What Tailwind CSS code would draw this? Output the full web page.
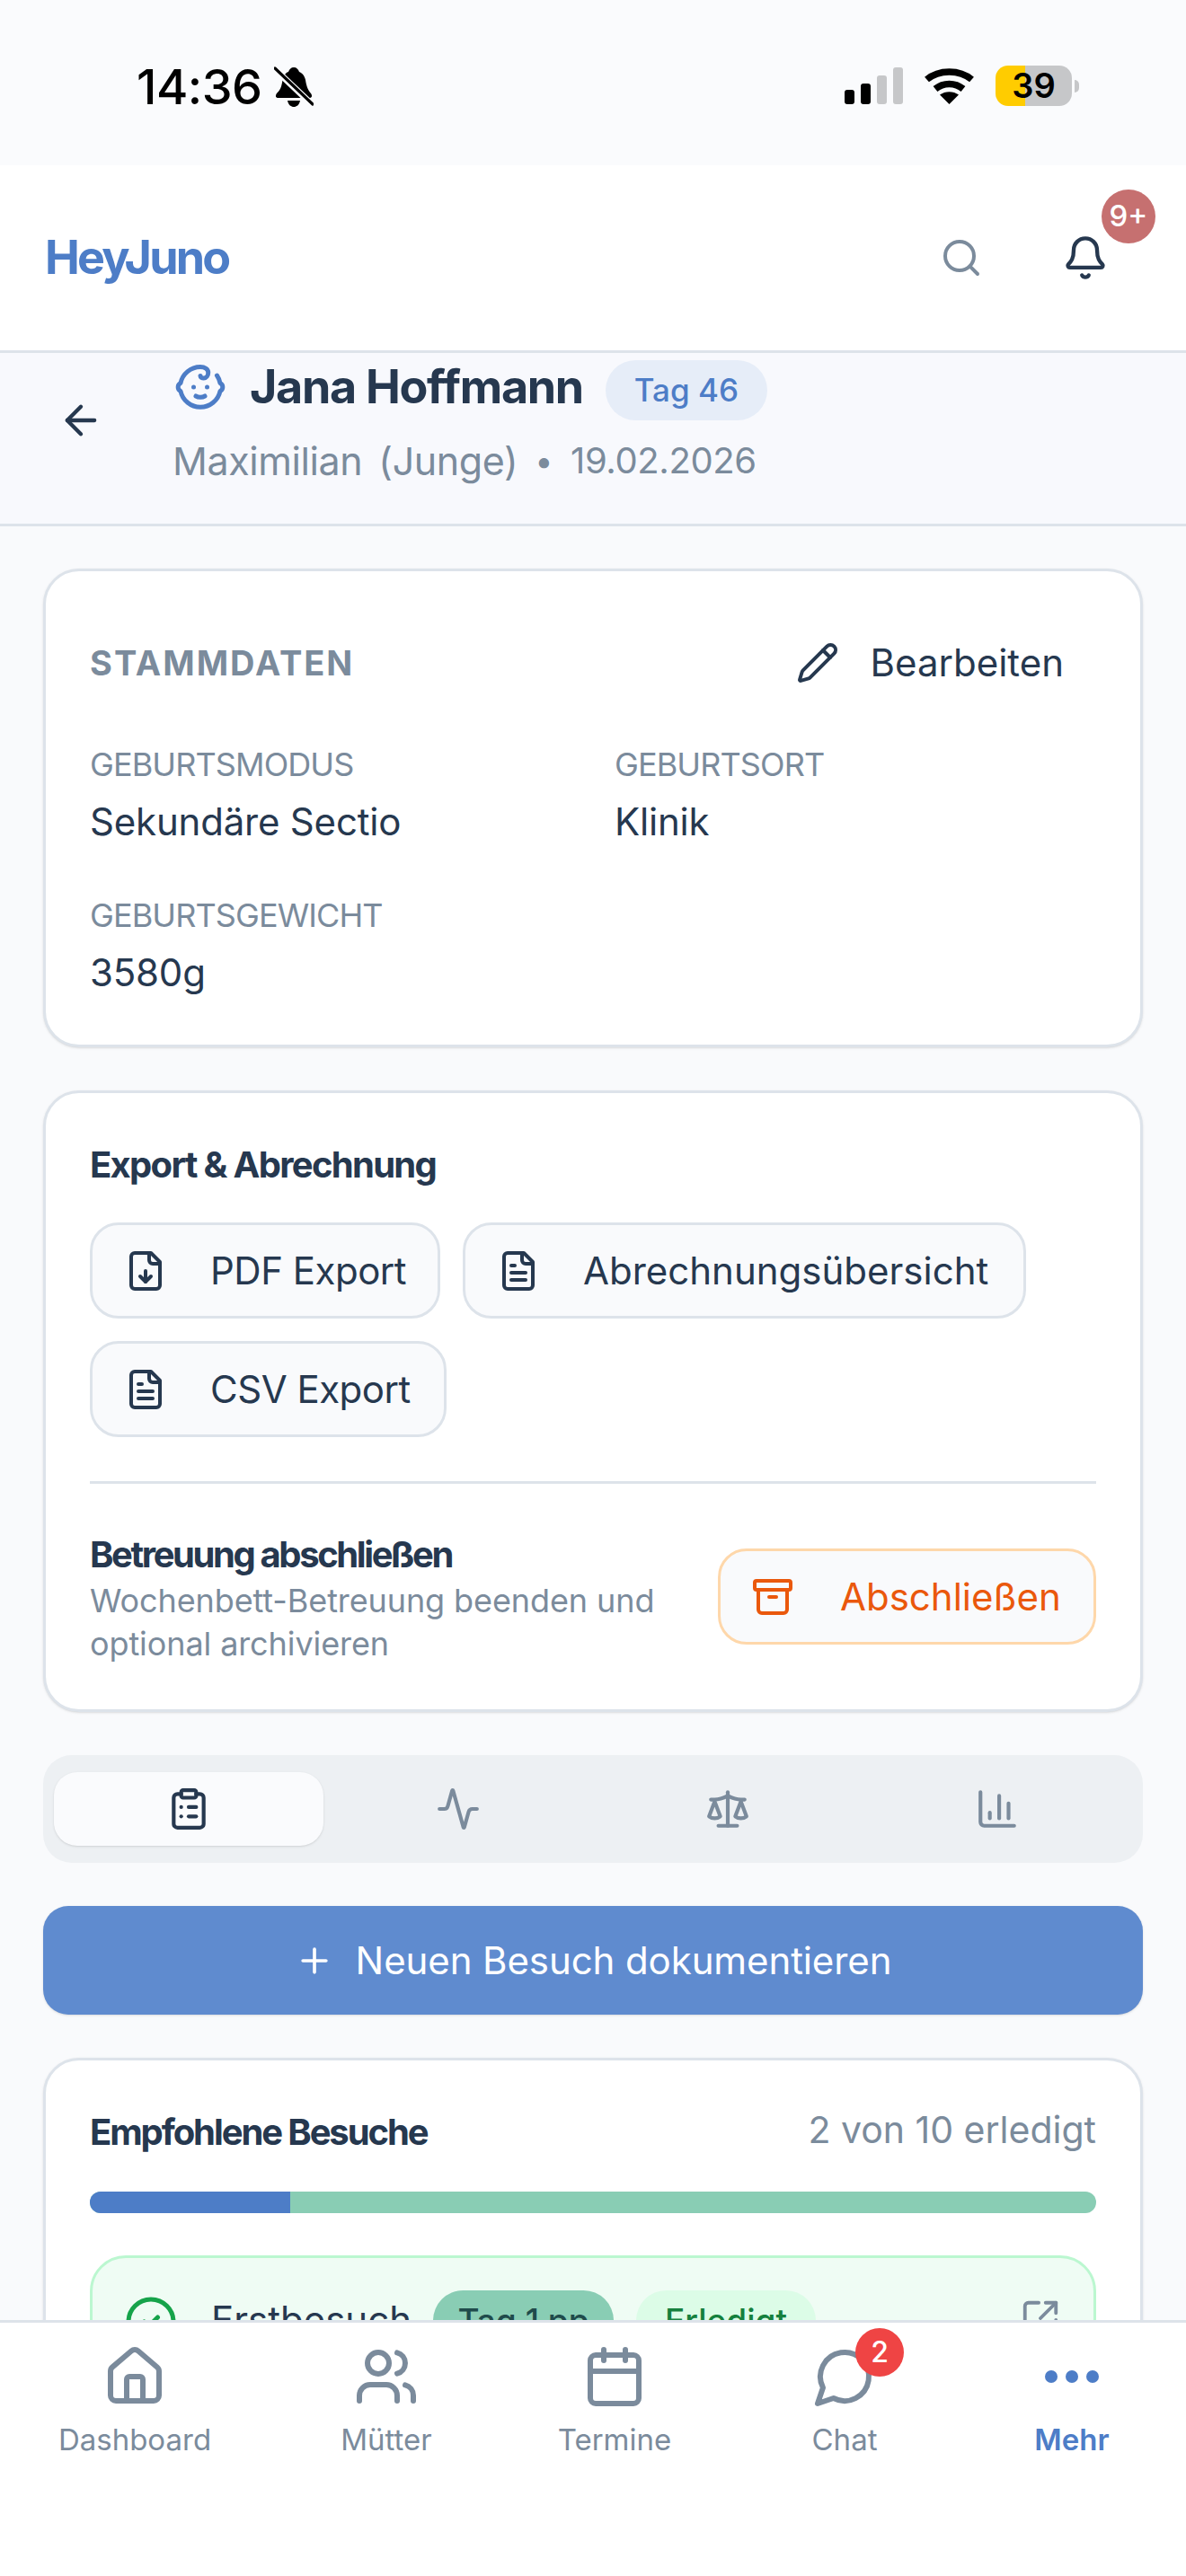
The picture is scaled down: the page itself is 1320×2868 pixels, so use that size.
<!DOCTYPE html>
<html lang="de">
<head>
<meta charset="utf-8">
<script src="https://cdn.jsdelivr.net/npm/@tailwindcss/browser@4"></script>
<title>HeyJuno</title>
</head>
<body class="m-0 bg-[#f9fafc]">
<div class="w-[1320px] h-[2868px] flex flex-col overflow-hidden font-['Inter',sans-serif] text-[#26384f] bg-[#f9fafc]">

  <!-- status bar -->
  <div class="h-[184px] shrink-0 bg-[#fafbfd] relative flex justify-between items-start pt-[66px] pl-[152px] pr-[119px] text-black">
    <div class="flex items-center gap-[13px]">
      <span class="text-[54px] leading-[62px] font-medium tracking-[-0.5px]">14:36</span>
      <svg width="44" height="46" viewBox="0 0 44 46"><path d="M22 1c3 0 5 2 6 5 3 1 6 4 7 9 1 6 2 10 6 15 2 3 1 5-2 5H5c-3 0-4-2-2-5 4-4 5-7 6-12 1-6 3-11 7-12 1-3 3-5 6-5z" fill="#000"/><path d="M15 38h14c-1 5-4 7-7 7s-6-2-7-7z" fill="#000"/><path d="M2 4l40 38" stroke="#fafbfd" stroke-width="7"/><path d="M1 2l42 40" stroke="#000" stroke-width="3.2" stroke-linecap="round"/></svg>
    </div>
    <div class="flex items-start gap-[23px] pt-[8px]">
      <svg width="65" height="41" viewBox="0 0 65 41" class="mt-[1px]"><rect x="0" y="25" width="11" height="16" rx="3" fill="#000"/><rect x="18" y="18" width="11" height="23" rx="3" fill="#000"/><rect x="36" y="9" width="11" height="32" rx="3" fill="#c6c7c9"/><rect x="54" y="0" width="11" height="41" rx="3" fill="#c6c7c9"/></svg>
      <svg width="57" height="42" viewBox="0 0 57 42"><path d="M3.5 14.5C17 3 40 3 53.500 14.500" fill="none" stroke="#000" stroke-width="7.500"/><path d="M13 25c9-7.500 22-7.500 31 0" fill="none" stroke="#000" stroke-width="7.500"/><path d="M28.500 42L18 31.500c6-4.500 15-4.500 21 0z" fill="#000"/></svg>
      <div class="flex items-center -mt-[1px]">
        <div class="w-[85px] h-[45px] rounded-[14px] bg-[linear-gradient(90deg,#ffcc00_33px,#c6c7c9_33px)] flex items-center justify-center">
          <span class="text-[38px] leading-[45px] font-semibold text-black">39</span>
        </div>
        <div class="w-[5px] h-[14px] ml-[3px] rounded-r-full bg-[#c6c7c9]"></div>
      </div>
    </div>
  </div>

  <!-- app header -->
  <header class="h-[209px] shrink-0 bg-white border-b-[3px] border-[#dde3ea] flex items-center justify-between pl-[50px] pr-[86px]">
    <div class="text-[52px] leading-[60px] font-bold tracking-[-2.800px] text-[#4d7dc7]">HeyJuno</div>
    <div class="flex items-center gap-[88px]">
      <svg width="48" height="48" viewBox="0 0 24 24" fill="none" stroke="#7b8b9c" stroke-width="2" stroke-linecap="round" stroke-linejoin="round"><path d="m21 21-4.300-4.300"/><circle cx="11" cy="11" r="8"/></svg>
      <div class="relative">
        <svg width="52" height="52" viewBox="0 0 24 24" fill="none" stroke="#26384f" stroke-width="2" stroke-linecap="round" stroke-linejoin="round"><path d="M10.268 21a2 2 0 0 0 3.464 0"/><path d="M3.262 15.326A1 1 0 0 0 4 17h16a1 1 0 0 0 .74-1.673C19.410 13.956 18 12.499 18 8A6 6 0 0 0 6 8c0 4.499-1.411 5.956-2.738 7.326"/></svg>
        <div class="absolute left-[44px] -top-[50px] w-[60px] h-[60px] rounded-full bg-[#c67070] text-white text-[33px] font-medium flex items-center justify-center">9+</div>
      </div>
    </div>
  </header>

  <!-- patient header -->
  <div class="h-[193px] shrink-0 bg-[#f8f9fd] border-b-[3px] border-[#dde3ea] flex items-start pl-[64px]">
    <svg class="mt-[49px] shrink-0" width="52" height="52" viewBox="0 0 24 24" fill="none" stroke="#26384f" stroke-width="2" stroke-linecap="round" stroke-linejoin="round"><path d="m12 19-7-7 7-7"/><path d="M19 12H5"/></svg>
    <div class="ml-[77px] flex flex-col">
      <div class="flex items-center h-[72px] mt-[2px]">
        <svg class="shrink-0" width="60" height="60" viewBox="0 0 24 24" fill="none" stroke="#4d7dc7" stroke-width="2" stroke-linecap="round" stroke-linejoin="round"><path d="M10 16c.5.3 1.200.5 2 .5s1.500-.2 2-.5"/><path d="M15 12h.01"/><path d="M19.380 6.813A9 9 0 0 1 20.800 10.200a2 2 0 0 1 0 3.600 9 9 0 0 1-17.600 0 2 2 0 0 1 0-3.600A9 9 0 0 1 12 3c2 0 3.500 1.100 3.500 2.500s-.9 2.500-2 2.500c-.8 0-1.500-.4-1.500-1"/><path d="M9 12h.01"/></svg>
        <span class="ml-[25px] text-[52px] leading-[60px] font-bold tracking-[-1.300px] text-[#26384f]">Jana Hoffmann</span>
        <span class="ml-[25px] mt-[6px] w-[180px] h-[67px] rounded-full bg-[#e6edf8] text-[#4d7dc7] text-[35px] font-medium flex items-center justify-center">Tag 46</span>
      </div>
      <div class="mt-[20px] flex items-center text-[43px] leading-[52px] text-[#7b8b9c] whitespace-nowrap tracking-[-0.400px] -ml-[1px]">
        <span>Maximilian</span>
        <span class="ml-[18px]">(Junge)</span>
        <span class="ml-[19px] text-[36px]">•</span>
        <span class="ml-[20px] text-[40px]">19.02.2026</span>
      </div>
    </div>
  </div>

  <!-- content -->
  <main class="flex-1 min-h-0 overflow-hidden px-[48px] pt-[47px] flex flex-col gap-[48px]">

    <!-- Stammdaten -->
    <section class="shrink-0 bg-white border-[3px] border-[#dde3ea] rounded-[40px] shadow-sm px-[49px] pt-[72px] pb-[52px]">
      <div class="flex items-center justify-between h-[60px]">
        <h2 class="text-[38px] leading-[60px] font-bold text-[#7b8b9c] tracking-[2px]">STAMMDATEN</h2>
        <div class="flex items-center gap-[35px] pr-[36px]">
          <svg width="48" height="48" viewBox="0 0 24 24" fill="none" stroke="#26384f" stroke-width="2" stroke-linecap="round" stroke-linejoin="round"><path d="M21.174 6.812a1 1 0 0 0-3.986-3.987L3.842 16.174a2 2 0 0 0-.5.83l-1.321 4.352a.5.5 0 0 0 .623.622l4.353-1.320a2 2 0 0 0 .83-.497z"/><path d="m15 5 4 4"/></svg>
          <span class="text-[42px] leading-[52px] font-normal">Bearbeiten</span>
        </div>
      </div>
      <div class="grid grid-cols-2 gap-x-[48px] gap-y-[53px] mt-[60px]">
        <div>
          <div class="text-[36px] leading-[46px] text-[#7b8b9c] tracking-[-0.900px]">GEBURTSMODUS</div>
          <div class="mt-[13px] text-[42px] leading-[56px] font-normal tracking-[-0.200px]">Sekundäre Sectio</div>
        </div>
        <div>
          <div class="text-[36px] leading-[46px] text-[#7b8b9c] tracking-[-0.900px]">GEBURTSORT</div>
          <div class="mt-[13px] text-[42px] leading-[56px] font-normal tracking-[-0.200px]">Klinik</div>
        </div>
        <div>
          <div class="text-[36px] leading-[46px] text-[#7b8b9c] tracking-[-0.900px]">GEBURTSGEWICHT</div>
          <div class="mt-[13px] text-[42px] leading-[56px] font-normal tracking-[-0.200px]">3580g</div>
        </div>
      </div>
    </section>

    <!-- Export -->
    <section class="shrink-0 bg-white border-[3px] border-[#dde3ea] rounded-[40px] shadow-sm px-[49px] pt-[52px] pb-[49px]">
      <h3 class="text-[40px] leading-[56px] font-bold tracking-[-1.700px]">Export &amp; Abrechnung</h3>
      <div class="mt-[36px] flex flex-wrap gap-x-[25px] gap-y-[25px] w-[1100px]">
        <div class="w-[390px] h-[107px] bg-[#f9fafc] border-[3px] border-[#dde3ea] rounded-[32px] flex items-center pl-[35px] gap-[48px]">
          <svg class="shrink-0" width="48" height="48" viewBox="0 0 24 24" fill="none" stroke="#26384f" stroke-width="2" stroke-linecap="round" stroke-linejoin="round"><path d="M15 2H6a2 2 0 0 0-2 2v16a2 2 0 0 0 2 2h12a2 2 0 0 0 2-2V7Z"/><path d="M14 2v4a2 2 0 0 0 2 2h4"/><path d="M12 18v-6"/><path d="m9 15 3 3 3-3"/></svg>
          <span class="text-[42px] font-normal tracking-[-0.500px] whitespace-nowrap">PDF Export</span>
        </div>
        <div class="w-[627px] h-[107px] bg-[#f9fafc] border-[3px] border-[#dde3ea] rounded-[32px] flex items-center pl-[35px] gap-[48px]">
          <svg class="shrink-0" width="48" height="48" viewBox="0 0 24 24" fill="none" stroke="#26384f" stroke-width="2" stroke-linecap="round" stroke-linejoin="round"><path d="M15 2H6a2 2 0 0 0-2 2v16a2 2 0 0 0 2 2h12a2 2 0 0 0 2-2V7Z"/><path d="M14 2v4a2 2 0 0 0 2 2h4"/><path d="M10 9H8"/><path d="M16 13H8"/><path d="M16 17H8"/></svg>
          <span class="text-[42px] font-normal whitespace-nowrap">Abrechnungsübersicht</span>
        </div>
        <div class="w-[397px] h-[107px] bg-[#f9fafc] border-[3px] border-[#dde3ea] rounded-[32px] flex items-center pl-[35px] gap-[48px]">
          <svg class="shrink-0" width="48" height="48" viewBox="0 0 24 24" fill="none" stroke="#26384f" stroke-width="2" stroke-linecap="round" stroke-linejoin="round"><path d="M15 2H6a2 2 0 0 0-2 2v16a2 2 0 0 0 2 2h12a2 2 0 0 0 2-2V7Z"/><path d="M14 2v4a2 2 0 0 0 2 2h4"/><path d="M10 9H8"/><path d="M16 13H8"/><path d="M16 17H8"/></svg>
          <span class="text-[42px] font-normal tracking-[-0.500px] whitespace-nowrap">CSV Export</span>
        </div>
      </div>
      <div class="mt-[49px] border-t-[3px] border-[#dde3ea] pt-[53px] flex items-center justify-between">
        <div class="w-[660px]">
          <div class="text-[40px] leading-[52px] font-bold tracking-[-2.400px]">Betreuung abschließen</div>
          <div class="mt-[1px] text-[36px] leading-[48px] text-[#7b8b9c] tracking-[-0.100px]">Wochenbett-Betreuung beenden und optional archivieren</div>
        </div>
        <div class="w-[421px] h-[107px] shrink-0 bg-[#f9fafc] border-[3px] border-[#fed7aa] rounded-[32px] flex items-center pl-[34px] gap-[51px] text-[#ea580c] -mt-[4px]">
          <svg class="shrink-0" width="48" height="48" viewBox="0 0 24 24" fill="none" stroke="#ea580c" stroke-width="2" stroke-linecap="round" stroke-linejoin="round"><rect width="20" height="5" x="2" y="3" rx="1"/><path d="M4 8v11a2 2 0 0 0 2 2h12a2 2 0 0 0 2-2V8"/><path d="M10 12h4"/></svg>
          <span class="text-[42px] font-normal whitespace-nowrap">Abschließen</span>
        </div>
      </div>
    </section>

    <!-- Tabs -->
    <div class="shrink-0 h-[120px] bg-[#edf0f3] rounded-[32px] px-[12px] py-[19px] grid grid-cols-4">
      <div class="bg-[#fafbfd] rounded-[26px] shadow-sm flex items-center justify-center">
        <svg width="50" height="50" viewBox="0 0 24 24" fill="none" stroke="#26384f" stroke-width="2" stroke-linecap="round" stroke-linejoin="round"><rect width="8" height="4" x="8" y="2" rx="1" ry="1"/><path d="M16 4h2a2 2 0 0 1 2 2v14a2 2 0 0 1-2 2H6a2 2 0 0 1-2-2V6a2 2 0 0 1 2-2h2"/><path d="M12 11h4"/><path d="M12 16h4"/><path d="M8 11h.01"/><path d="M8 16h.01"/></svg>
      </div>
      <div class="flex items-center justify-center">
        <svg width="50" height="50" viewBox="0 0 24 24" fill="none" stroke="#7b8b9c" stroke-width="2" stroke-linecap="round" stroke-linejoin="round"><path d="M22 12h-2.480a2 2 0 0 0-1.930 1.460l-2.350 8.360a.25.25 0 0 1-.48 0L9.240 2.180a.25.25 0 0 0-.48 0l-2.350 8.360A2 2 0 0 1 4.490 12H2"/></svg>
      </div>
      <div class="flex items-center justify-center">
        <svg width="50" height="50" viewBox="0 0 24 24" fill="none" stroke="#7b8b9c" stroke-width="2" stroke-linecap="round" stroke-linejoin="round"><path d="m16 16 3-8 3 8c-.87.65-1.920 1-3 1s-2.130-.35-3-1Z"/><path d="m2 16 3-8 3 8c-.87.65-1.920 1-3 1s-2.130-.35-3-1Z"/><path d="M7 21h10"/><path d="M12 3v18"/><path d="M3 7h2c2 0 5-1 7-2 2 1 5 2 7 2h2"/></svg>
      </div>
      <div class="flex items-center justify-center">
        <svg width="50" height="50" viewBox="0 0 24 24" fill="none" stroke="#7b8b9c" stroke-width="2" stroke-linecap="round" stroke-linejoin="round"><path d="M3 3v16a2 2 0 0 0 2 2h16"/><path d="M18 17V9"/><path d="M13 17V5"/><path d="M8 17v-3"/></svg>
      </div>
    </div>

    <!-- CTA -->
    <div class="shrink-0 h-[121px] bg-[#5f8bcf] rounded-[28px] shadow-sm flex items-center justify-center gap-[24px] text-white">
      <svg width="44" height="44" viewBox="0 0 24 24" fill="none" stroke="#fff" stroke-width="2" stroke-linecap="round" stroke-linejoin="round"><path d="M5 12h14"/><path d="M12 5v14"/></svg>
      <span class="text-[42px] font-normal tracking-[-0.100px]">Neuen Besuch dokumentieren</span>
    </div>

    <!-- Empfohlene Besuche -->
    <section class="shrink-0 bg-white border-[3px] border-[#dde3ea] rounded-[40px] shadow-sm px-[49px] pt-[50px] pb-[49px]">
      <div class="flex items-center justify-between h-[60px]">
        <h3 class="text-[40px] leading-[60px] font-bold tracking-[-2.100px]">Empfohlene Besuche</h3>
        <span class="text-[41px] leading-[60px] text-[#7b8b9c] -mt-[6px]">2 von 10 erledigt</span>
      </div>
      <div class="mt-[36px] h-[24px] rounded-full bg-[#89cdb4] overflow-hidden">
        <div class="w-[223px] h-full bg-[#4d7dc7]"></div>
      </div>
      <div class="mt-[47px] h-[220px] bg-[#effcf4] border-[3px] border-[#bbf7d0] rounded-[40px] pl-[35px] pr-[36px] pt-[36px] flex items-start">
        <svg class="mt-[5px] shrink-0" width="60" height="60" viewBox="0 0 24 24" fill="none" stroke="#16a34a" stroke-width="2" stroke-linecap="round" stroke-linejoin="round"><circle cx="12" cy="12" r="10"/><path d="m9 12 2 2 4-4"/></svg>
        <span class="ml-[37px] mt-[3px] w-[210px] text-[42px] leading-[60px] font-normal">Erstbesuch</span>
        <span class="ml-[37px] w-[201px] h-[67px] rounded-full bg-[#89cdb4] text-[#1f4b4b] text-[37px] font-medium flex items-center justify-center shrink-0">Tag 1 pp</span>
        <span class="ml-[25px] w-[200px] h-[67px] rounded-full bg-[#dcfce7] text-[#15803d] text-[37px] font-medium flex items-center justify-center shrink-0">Erledigt</span>
        <svg class="ml-auto mt-[8px] shrink-0" width="46" height="46" viewBox="0 0 24 24" fill="none" stroke="#7b8b9c" stroke-width="2" stroke-linecap="round" stroke-linejoin="round"><path d="M21 13v6a2 2 0 0 1-2 2H5a2 2 0 0 1-2-2V5a2 2 0 0 1 2-2h6"/><path d="m21 3-9 9"/><path d="M15 3h6v6"/></svg>
      </div>
    </section>
  </main>

  <!-- bottom nav -->
  <nav class="h-[285px] shrink-0 bg-white border-t-[3px] border-[#dde3ea] flex items-start pt-[24px] text-[#7b8b9c]">
    <div class="w-[300px] flex flex-col items-center gap-[14px]">
      <svg width="72" height="72" viewBox="0 0 24 24" fill="none" stroke="#7b8b9c" stroke-width="2" stroke-linecap="round" stroke-linejoin="round"><path d="M15 21v-8a1 1 0 0 0-1-1h-4a1 1 0 0 0-1 1v8"/><path d="M3 10a2 2 0 0 1 .709-1.528l7-5.999a2 2 0 0 1 2.582 0l7 5.999A2 2 0 0 1 21 10v9a2 2 0 0 1-2 2H5a2 2 0 0 1-2-2z"/></svg>
      <span class="text-[33px] leading-[40px] font-normal">Dashboard</span>
    </div>
    <div class="w-[260px] flex flex-col items-center gap-[14px]">
      <svg width="72" height="72" viewBox="0 0 24 24" fill="none" stroke="#7b8b9c" stroke-width="2" stroke-linecap="round" stroke-linejoin="round"><path d="M16 21v-2a4 4 0 0 0-4-4H6a4 4 0 0 0-4 4v2"/><path d="M16 3.128a4 4 0 0 1 0 7.744"/><path d="M22 21v-2a4 4 0 0 0-3-3.870"/><circle cx="9" cy="7" r="4"/></svg>
      <span class="text-[33px] leading-[40px] font-normal">Mütter</span>
    </div>
    <div class="w-[248px] flex flex-col items-center gap-[14px]">
      <svg width="72" height="72" viewBox="0 0 24 24" fill="none" stroke="#7b8b9c" stroke-width="2" stroke-linecap="round" stroke-linejoin="round"><path d="M8 2v4"/><path d="M16 2v4"/><rect width="18" height="18" x="3" y="4" rx="2"/><path d="M3 10h18"/></svg>
      <span class="text-[33px] leading-[40px] font-normal">Termine</span>
    </div>
    <div class="w-[264px] flex flex-col items-center gap-[14px]">
      <div class="relative w-[72px] h-[72px]">
        <svg width="72" height="72" viewBox="0 0 24 24" fill="none" stroke="#7b8b9c" stroke-width="2" stroke-linecap="round" stroke-linejoin="round"><path d="M7.900 20A9 9 0 1 0 4 16.100L2 22Z"/></svg>
        <div class="absolute left-[48px] -top-[18px] w-[54px] h-[54px] rounded-full bg-[#ef4444] text-white text-[32px] font-medium flex items-center justify-center">2</div>
      </div>
      <span class="text-[33px] leading-[40px] font-normal">Chat</span>
    </div>
    <div class="w-[242px] flex flex-col items-center gap-[14px] text-[#4d7dc7]">
      <svg width="72" height="72" viewBox="0 0 72 72" fill="#4d7dc7"><circle cx="13" cy="36" r="7"/><circle cx="36" cy="36" r="7"/><circle cx="59" cy="36" r="7"/></svg>
      <span class="text-[33px] leading-[40px] font-semibold">Mehr</span>
    </div>
  </nav>
</div>
</body>
</html>
